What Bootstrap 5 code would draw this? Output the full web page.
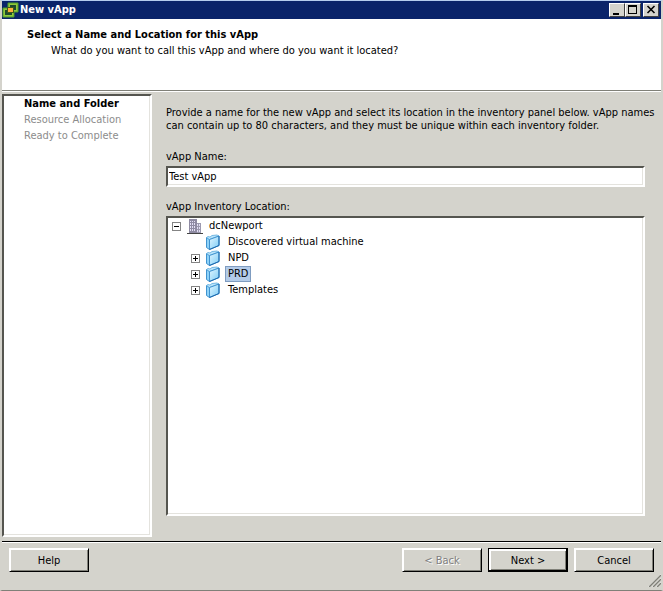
<!DOCTYPE html>
<html lang="en">
<head>
<meta charset="utf-8">
<meta name="viewport" content="width=device-width, initial-scale=1">
<title>New vApp</title>
<link href="https://cdn.jsdelivr.net/npm/bootstrap@5.3.0/dist/css/bootstrap.min.css" rel="stylesheet">
<style>
:root { --face: #d4d3cc; --shade: #808078; --dark: #404040; }
body {
  font: 11px/13px Tahoma, "DejaVu Sans Condensed", "DejaVu Sans", sans-serif;
  color: #000; background: var(--face);
}
.dialog-window { border: solid; border-width: 1px 2px; border-color: #b5cdee #d4d3cc; border-bottom: 1px solid var(--shade); }
.title-bar { height: 18px; background: #0a246a; color: #fff; padding: 0 2px 0 0; }
.title-bar h1, .page-head h2 { font-size: 11px; line-height: 16px; font-weight: bold; margin: 0; }
.title-bar h1 { padding-left: 1px; }
.caption-btn {
  width: 16px; height: 14px; padding: 0; background: var(--face);
  border: 1px solid; border-color: #fff var(--dark) var(--dark) #fff;
}
.caption-btn.close-btn { margin-left: 2px; }
.caption-btn svg, .tree-row svg, .title-bar svg { display: block; flex: none; }
.page-head { height: 73px; padding: 8px 25px; border-bottom: 1px solid #fff; background: #fff; box-shadow: inset 0 -1px var(--shade); }
.page-head p { line-height: 16px; padding-left: 24px; }
.dialog-main { padding: 2px 0 4px; }
.sunken {
  background: #fff; border: 2px solid; border-radius: 0;
  border-color: #55554f #fff #fff #55554f;
  box-shadow: inset -1px -1px #e4e3de;
}
.steps { width: 150px; line-height: 16px; }
.steps a { color: #8c8c8c; text-decoration: none; display: block; padding-left: 20px; }
.steps a.current { color: #000; font-weight: bold; }
.form-side { padding: 12px 16px 21px 14px; }
.form-side .intro { margin: 0 -14px 18px 0; }
.field-label { margin-bottom: 3px; }
.tree-label { margin-top: 13px; }
.name-input { height: 21px; width: 100%; padding: 0 1px; font: inherit; color: #000; outline: 0; }
.tree-row { height: 16px; gap: 6px; }
.tree-row.root { padding-left: 4px; }
.tree-row.child { padding-left: 23px; }
.expander { width: 9px; height: 9px; padding: 0; border: 1px solid #848484; background: #fff; flex: none; }
.expander svg { width: 7px; height: 7px; }
.expander-gap { width: 9px; }
.node-label { line-height: 14px; padding: 0 2px; border: 1px solid transparent; margin-left: -3px; }
.node-label.selected { background: #b3cbe8; border-color: #7f9cc0; }
.foot { height: 49px; border-top: 1px solid #000; box-shadow: inset 0 1px #fff; padding: 6px 7px 0 7px; gap: 6px; }
.push {
  width: 80px; height: 24px; padding: 0; color: #000; background: var(--face); font: inherit;
  border: 1px solid; border-color: #fff #000 #000 #fff; border-radius: 0;
  box-shadow: inset 1px 1px #fff, inset -1px -1px var(--shade);
}
.push:disabled { color: #808080; text-shadow: 1px 1px #fff; }
.push.default { border-color: #000; box-shadow: inset -1px -1px #000, inset 2px 2px #fff, inset -2px -2px var(--shade); }
.grip { right: 0; bottom: 3px; }
</style>
<script src="https://cdn.jsdelivr.net/npm/bootstrap@5.3.0/dist/js/bootstrap.bundle.min.js"></script>
</head>
<body>
<svg width="0" height="0" class="position-absolute" aria-hidden="true">
  <defs>
    <linearGradient id="blue" x1="0" y1="0" x2="1" y2="1"><stop offset="0" stop-color="#e2f6ff"/><stop offset="1" stop-color="#7cccf6"/></linearGradient>
    <symbol id="folder" viewBox="0 0 16 16">
      <path d="M.500 3.500 3.500 5.500v10L.500 13.500z" fill="#8ed2f8" stroke="#3f93d0"/>
      <path d="M.500 3.500 2 2.500l2 .5 2-1.500 5-.5 2 1-9.500 3.500z" fill="#b9e4fb" stroke="#5aa9dc" stroke-width=".8"/>
      <path d="M3.500 5.500 13 2v9.500L3.500 15.500z" fill="url(#blue)" stroke="#3f93d0"/>
      <path d="M13 2v9.500L3.500 15.500" fill="none" stroke="#1c68ac"/>
    </symbol>
  </defs>
</svg>
<div class="dialog-window min-vh-100 d-flex flex-column">
  <header class="title-bar d-flex align-items-center">
    <svg width="17" height="16" viewBox="0 0 17 16" aria-hidden="true">
      <path d="M6 1h10v9h-4v5H1V6h5z" fill="#8fc93a" stroke="#4f9a2a"/>
      <path d="M8 3h6v5h-2V5H8zM3 8h2v3h5v2H3z" fill="#1d4a2c"/>
      <path d="M5 5h7v6H5z" fill="#3c5a1c"/><path d="M6 6h5v4H6z" fill="#ffae3c"/>
    </svg>
    <h1 class="flex-grow-1">New vApp</h1>
    <button class="caption-btn" type="button" aria-label="Minimize"><svg width="14" height="12" aria-hidden="true"><path d="M3 9h6v2H3z"/></svg></button>
    <button class="caption-btn" type="button" aria-label="Maximize"><svg width="14" height="12" aria-hidden="true"><path d="M2 1h9v9H2zM3 3v6h7V3z" fill-rule="evenodd"/></svg></button>
    <button class="caption-btn close-btn" type="button" aria-label="Close"><svg width="14" height="12" aria-hidden="true"><path d="m3.500 2 7 7m0-7-7 7" stroke="#000" stroke-width="1.600"/></svg></button>
  </header>
  <section class="page-head">
    <h2>Select a Name and Location for this vApp</h2>
    <p class="m-0">What do you want to call this vApp and where do you want it located?</p>
  </section>
  <main class="dialog-main d-flex flex-grow-1">
    <nav class="steps sunken flex-shrink-0" aria-label="Wizard steps">
      <a class="current" href="#name" aria-current="step">Name and Folder</a>
      <a href="#resources">Resource Allocation</a>
      <a href="#ready">Ready to Complete</a>
    </nav>
    <form class="form-side flex-grow-1 d-flex flex-column" id="name">
      <p class="intro">Provide a name for the new vApp and select its location in the inventory panel below. vApp names can contain up to 80 characters, and they must be unique within each inventory folder.</p>
      <label class="field-label" for="vapp-name">vApp Name:</label>
      <input class="name-input sunken" id="vapp-name" type="text" value="Test vApp">
      <div class="field-label tree-label" id="tree-label">vApp Inventory Location:</div>
      <ul class="sunken list-unstyled mb-0 flex-grow-1" aria-labelledby="tree-label">
        <li>
          <div class="tree-row root d-flex align-items-center">
            <button class="expander" type="button" aria-label="Collapse dcNewport"><svg aria-hidden="true"><path d="M1 3h5v1H1z"/></svg></button>
            <svg width="16" height="16" viewBox="0 0 16 16" aria-hidden="true">
              <path d="M2 1h8v14H2z" fill="#8f8ba3"/><path d="M10 5h4v10h-4z" fill="#9d9ab0"/>
              <path d="M3 3h1v1H3zm2 0h1v1H5zm2 0h1v1H7zM3 5h1v2H3zm2 0h1v2H5zm2 0h1v2H7zM3 8h1v2H3zm2 0h1v2H5zm2 0h1v2H7zM3 11h1v2H3zm2 0h1v2H5zm2 0h1v2H7zM10 6h1v2h-1zm2 0h1v2h-1zM10 9h1v2h-1zm2 0h1v2h-1zM10 12h1v2h-1zm2 0h1v2h-1z" fill="#e3dff5"/><path d="M0 15h16v1H0z" fill="#444"/>
            </svg>
            <span class="node-label">dcNewport</span>
          </div>
          <ul class="list-unstyled">
            <li class="tree-row child d-flex align-items-center"><span class="expander-gap"></span><svg width="16" height="16" aria-hidden="true"><use href="#folder"/></svg><span class="node-label">Discovered virtual machine</span></li>
            <li class="tree-row child d-flex align-items-center"><button class="expander" type="button" aria-label="Expand NPD"><svg aria-hidden="true"><path d="M1 3h5v1H1zM3 1h1v5H3z"/></svg></button><svg width="16" height="16" aria-hidden="true"><use href="#folder"/></svg><span class="node-label">NPD</span></li>
            <li class="tree-row child d-flex align-items-center"><button class="expander" type="button" aria-label="Expand PRD"><svg aria-hidden="true"><path d="M1 3h5v1H1zM3 1h1v5H3z"/></svg></button><svg width="16" height="16" aria-hidden="true"><use href="#folder"/></svg><span class="node-label selected">PRD</span></li>
            <li class="tree-row child d-flex align-items-center"><button class="expander" type="button" aria-label="Expand Templates"><svg aria-hidden="true"><path d="M1 3h5v1H1zM3 1h1v5H3z"/></svg></button><svg width="16" height="16" aria-hidden="true"><use href="#folder"/></svg><span class="node-label">Templates</span></li>
          </ul>
        </li>
      </ul>
    </form>
  </main>
  <footer class="foot position-relative d-flex align-items-start">
    <button class="push me-auto" type="button">Help</button>
    <button class="push" type="button" disabled>&lt; Back</button>
    <button class="push default" type="button">Next &gt;</button>
    <button class="push" type="button">Cancel</button>
    <svg class="grip position-absolute" width="13" height="13" aria-hidden="true"><path d="M0 13 13 0M4 13l9-9M8 13l5-5" stroke="#fff"/><path d="M1 13 13 1M5 13l8-8M9 13l4-4" stroke="#808078" stroke-width="1.500"/></svg>
  </footer>
</div>
</body>
</html>
